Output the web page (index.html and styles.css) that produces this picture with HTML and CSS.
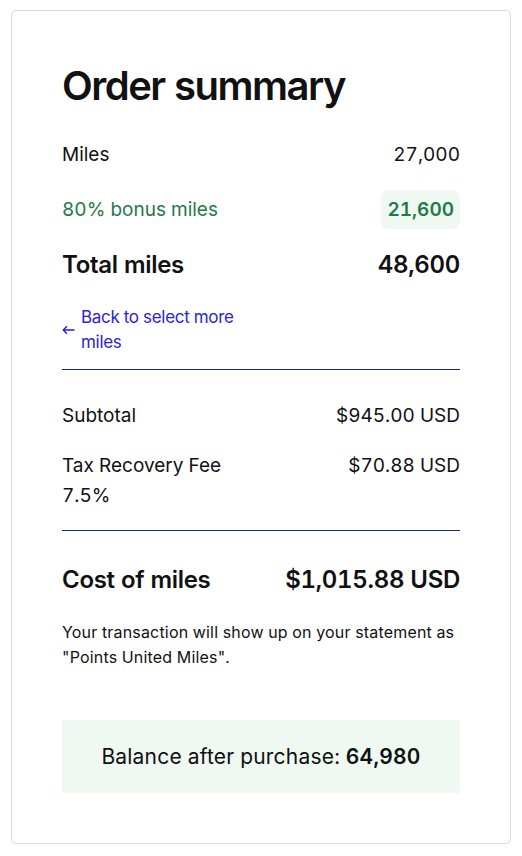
FILE: index.html
```html
<!DOCTYPE html>
<html lang="en">
<head>
  <meta charset="UTF-8">
  <meta name="viewport" content="width=device-width, initial-scale=1">
  <title>Order summary</title>
  <link rel="stylesheet" href="styles.css">
</head>
<body>
  <div class="card">
    <h1>Order summary</h1>
    <div class="row miles">
      <span>Miles</span>
      <span>27,000</span>
    </div>
    <div class="row bonus">
      <span>80% bonus miles</span>
      <span class="pill">21,600</span>
    </div>
    <div class="row total">
      <span>Total miles</span>
      <span>48,600</span>
    </div>
    <a class="back" href="#">
      <svg class="arrow" width="13" height="10" viewBox="0 0 13 10" aria-hidden="true">
        <path d="M12.5 5H1.2M5 1.2L1.2 5L5 8.8" fill="none" stroke="currentColor" stroke-width="1.4"/>
      </svg>
      <span>Back to select more miles</span>
    </a>
    <hr>
    <div class="row price subtotal">
      <span>Subtotal</span>
      <span>$945.00 USD</span>
    </div>
    <div class="row price fee">
      <span>Tax Recovery Fee<br>7.5%</span>
      <span>$70.88 USD</span>
    </div>
    <hr>
    <div class="row total cost">
      <span>Cost of miles</span>
      <span>$1,015.88 USD</span>
    </div>
    <p class="note">Your transaction will show up on your statement as "Points United Miles".</p>
    <div class="balance">Balance after purchase: <strong>64,980</strong></div>
  </div>
</body>
</html>
```

FILE: styles.css
```css
:root {
  --text: #111111;
  --green: #1e7a4a;
  --green-bg: #eff8f1;
  --link: #2a1ee0;
  --rule: #0c2d7a;
  --border: #d5d9e0;
}
*, *::before, *::after {
  box-sizing: border-box;
}
body {
  margin: 0;
  padding: 10px 11px 12px 11px;
  font-family: Inter, 'Noto Sans', sans-serif;
  color: var(--text);
  background: #fff;
  font-variant-numeric: tabular-nums;
}
.card {
  width: 500px;
  padding: 51px 50px 50px 50px;
  border: 1px solid var(--border);
  border-radius: 5px;
}
h1 {
  margin: 0 0 31px;
  font-size: 40px;
  line-height: 48px;
  font-weight: 600;
  letter-spacing: -1.5px;
}
.row {
  display: flex;
  justify-content: space-between;
  align-items: baseline;
  font-size: 19px;
  line-height: 28px;
}
.miles {
  margin-bottom: 21px;
}
.bonus {
  color: var(--green);
  margin-bottom: 20px;
}
.pill {
  padding: 5.5px 6px;
  border-radius: 8px;
  background: var(--green-bg);
  font-weight: 600;
}
.total {
  font-size: 24px;
  line-height: 32px;
  font-weight: 600;
  letter-spacing: -0.3px;
}
.back {
  display: flex;
  align-items: center;
  gap: 6px;
  width: 190px;
  margin-top: 24px;
  color: var(--link);
  text-decoration: none;
  font-size: 17px;
  line-height: 25px;
  letter-spacing: -0.3px;
}
.arrow {
  flex: none;
}
hr {
  margin: 14px 0 0;
  border: none;
  border-top: 1px solid var(--rule);
}
.price {
  line-height: 30px;
}
.subtotal {
  margin-top: 31px;
}
.fee {
  margin-top: 20px;
  margin-bottom: 19px;
}
.fee + hr {
  margin-top: 0;
}
.cost {
  margin-top: 33px;
}
.note {
  margin: 24px 0 0;
  font-size: 16px;
  line-height: 25px;
  letter-spacing: 0.18px;
}
.balance {
  margin-top: 50px;
  padding: 23px 10px;
  background: var(--green-bg);
  text-align: center;
  font-size: 21px;
  line-height: 27px;
  letter-spacing: 0.2px;
}
.balance strong {
  font-weight: 600;
}
```
